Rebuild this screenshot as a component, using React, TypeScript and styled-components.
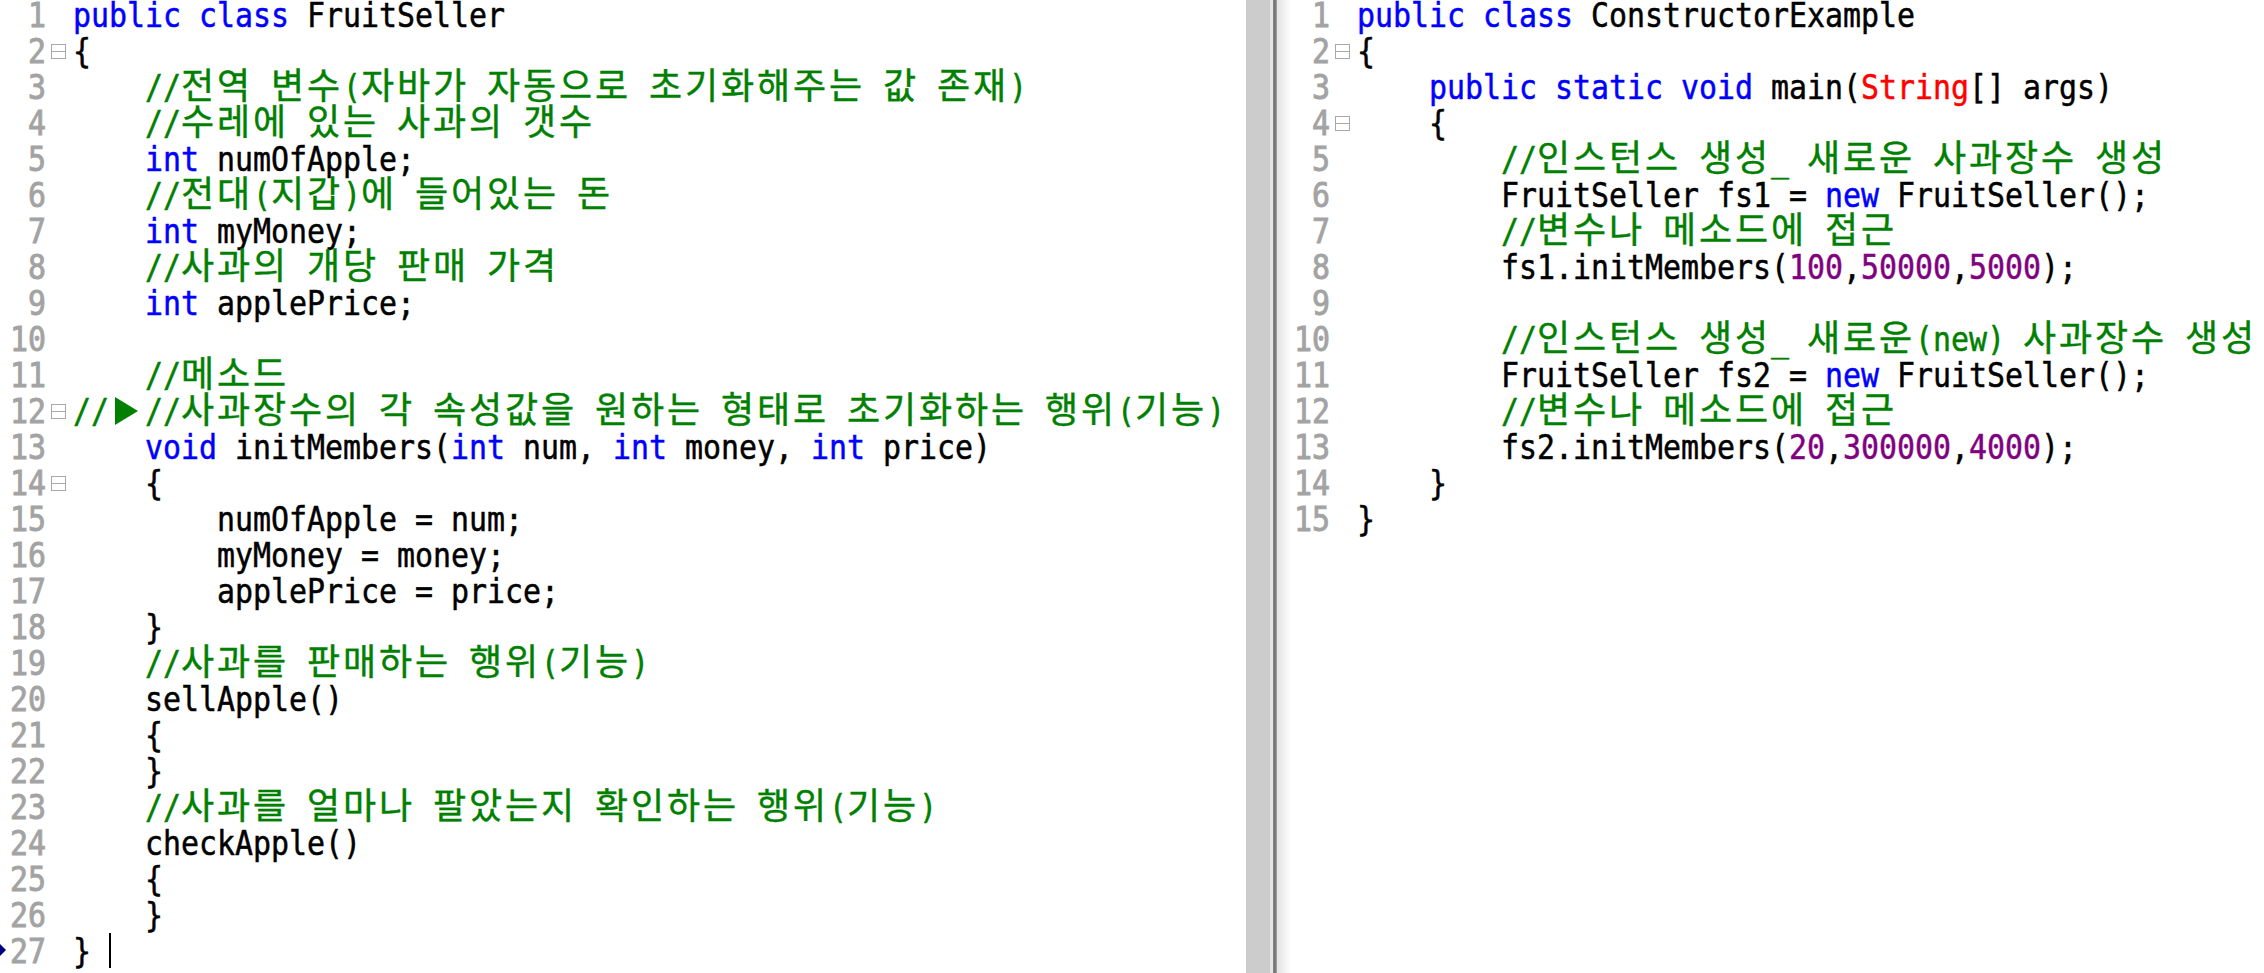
import React from "react";
import styled, { createGlobalStyle } from "styled-components";

const Global = createGlobalStyle`
  html, body { margin: 0; padding: 0; background: #fff; overflow: hidden; }
  #root { width: 2264px; height: 973px; overflow: hidden; }
`;

const CELL = 18;

const Frame = styled.div`
  display: flex;
  width: 2264px;
  height: 973px;
  overflow: hidden;
  background: #fff;
`;

const Pane = styled.div<{ $width: number }>`
  width: ${(p) => p.$width}px;
  flex: none;
  overflow: hidden;
  display: flex;
  flex-direction: column;
  margin-top: -2px;
`;

const Splitter = styled.div`
  flex: none;
  display: flex;
  width: 38px;
  height: 973px;
  position: relative;
`;

const SplitBar = styled.div`
  width: 24px;
  background: #cccccc;
`;

const SplitGap = styled.div`
  width: 3px;
  background: #e4e4e4;
`;

const SplitLine = styled.div`
  width: 4px;
  background: linear-gradient(90deg, #8a8a8a, #6e6e6e 50%, #a8a8a8);
`;

const SplitShadow = styled.div`
  position: absolute;
  left: 31px;
  top: 0;
  bottom: 0;
  width: 14px;
  background: linear-gradient(90deg, #e2e2e2, #ffffff);
`;

const Row = styled.div`
  display: flex;
  height: 36px;
  flex: none;
  position: relative;
  font-family: "DejaVu Sans Mono", monospace;
  font-size: 33px;
  line-height: 36px;
  white-space: pre;
  color: #000;
  -webkit-text-stroke: 0.5px currentColor;
`;

const LineNo = styled.div`
  width: 46px;
  flex: none;
  display: flex;
  justify-content: flex-end;
  color: #a3a3a3;
  -webkit-text-stroke: 0.9px currentColor;
`;

const FoldCell = styled.div`
  width: 27px;
  flex: none;
  padding: 10px 0 0 5px;
  box-sizing: border-box;
`;

const FoldBox = styled.div`
  width: 15px;
  height: 15px;
  box-sizing: border-box;
  border: 1px solid #a8a8a8;
  display: flex;
  align-items: center;
  &::before {
    content: "";
    display: block;
    width: 100%;
    height: 1px;
    background: #a8a8a8;
  }
`;

const Code = styled.div`
  flex: 1;
  min-width: 0;
`;

/* A run of Latin text: DejaVu Sans Mono narrowed to the 18px cell of the original editor font. */
const Latin = styled.span<{ $cols: number }>`
  display: inline-block;
  width: ${(p) => p.$cols * CELL}px;
  height: 36px;
  transform: scaleX(0.906);
  transform-origin: left center;
`;

const Kw = styled.span`
  color: #0000ff;
`;
const Str = styled.span`
  color: #ff0000;
`;
const Num = styled.span`
  color: #800080;
`;
const Cmt = styled.span`
  color: #008000;
`;
const Han = styled.span`
  font-family: "Noto Sans CJK KR", sans-serif;
  font-size: 36px;
  letter-spacing: 2.88px;
  line-height: 0;
  -webkit-text-stroke: 0.4px currentColor;
`;

const TabArrow = styled.svg`
  display: inline-block;
  width: 36px;
  height: 28px;
  vertical-align: top;
  margin-top: 3px;
`;

const Caret = styled.span`
  display: inline-block;
  width: 2px;
  height: 35px;
  background: #000;
  vertical-align: top;
  margin-top: -1px;
`;

const Marker = styled.svg`
  position: absolute;
  left: 0;
  top: 10px;
  width: 6px;
  height: 12px;
`;

const hangulSplit = /([\uac00-\ud7a3]+)/;
const L: React.FC<{ t: string }> = ({ t }) => <Latin $cols={t.length}>{t}</Latin>;

const withHan = (s: string) =>
  s.split(hangulSplit).map((part, i) => {
    if (i % 2) return <Han key={i}>{part}</Han>;
    return part ? <L key={i} t={part} /> : null;
  });

const renderCode = (s: string) => {
  if (s.trimStart().startsWith("//")) {
    return <Cmt>{withHan(s)}</Cmt>;
  }
  const parts = s.split(/(\b(?:public|class|static|void|int|new|String)\b|\b\d+\b)/);
  return parts.map((p, i) => {
    if (!p) return null;
    if (p === "String") return <Str key={i}><L t={p} /></Str>;
    if (/^(public|class|static|void|int|new)$/.test(p)) return <Kw key={i}><L t={p} /></Kw>;
    if (/^\d+$/.test(p)) return <Num key={i}><L t={p} /></Num>;
    return <L key={i} t={p} />;
  });
};

type LineDef = string | { special: "tab12" } | { special: "caret" };

const leftLines: LineDef[] = [
  "public class FruitSeller",
  "{",
  "    //전역 변수(자바가 자동으로 초기화해주는 값 존재)",
  "    //수레에 있는 사과의 갯수",
  "    int numOfApple;",
  "    //전대(지갑)에 들어있는 돈",
  "    int myMoney;",
  "    //사과의 개당 판매 가격",
  "    int applePrice;",
  "",
  "    //메소드",
  { special: "tab12" },
  "    void initMembers(int num, int money, int price)",
  "    {",
  "        numOfApple = num;",
  "        myMoney = money;",
  "        applePrice = price;",
  "    }",
  "    //사과를 판매하는 행위(기능)",
  "    sellApple()",
  "    {",
  "    }",
  "    //사과를 얼마나 팔았는지 확인하는 행위(기능)",
  "    checkApple()",
  "    {",
  "    }",
  { special: "caret" },
];

const rightLines: LineDef[] = [
  "public class ConstructorExample",
  "{",
  "    public static void main(String[] args)",
  "    {",
  "        //인스턴스 생성_ 새로운 사과장수 생성",
  "        FruitSeller fs1 = new FruitSeller();",
  "        //변수나 메소드에 접근",
  "        fs1.initMembers(100,50000,5000);",
  "",
  "        //인스턴스 생성_ 새로운(new) 사과장수 생성",
  "        FruitSeller fs2 = new FruitSeller();",
  "        //변수나 메소드에 접근",
  "        fs2.initMembers(20,300000,4000);",
  "    }",
  "}",
];

const renderLine = (l: LineDef) => {
  if (typeof l === "string") return renderCode(l);
  if (l.special === "tab12") {
    return (
      <Cmt>
        <L t="//" />
        <TabArrow viewBox="0 0 36 28">
          <polygon points="6,0 29,14 6,28" fill="#008000" stroke="none" />
        </TabArrow>
        {withHan("//사과장수의 각 속성값을 원하는 형태로 초기화하는 행위(기능)")}
      </Cmt>
    );
  }
  return (
    <>
      <L t="} " />
      <Caret />
    </>
  );
};

const Editor: React.FC<{ lines: LineDef[]; folds: number[]; width: number; marker?: number }> = ({
  lines,
  folds,
  width,
  marker,
}) => (
  <Pane $width={width}>
    {lines.map((l, i) => (
      <Row key={i}>
        {marker === i + 1 && (
          <Marker viewBox="0 0 6 12">
            <polygon points="0,0 6,6 0,12" fill="#000080" />
          </Marker>
        )}
        <LineNo>
          <L t={String(i + 1)} />
        </LineNo>
        <FoldCell>{folds.includes(i + 1) && <FoldBox />}</FoldCell>
        <Code>{renderLine(l)}</Code>
      </Row>
    ))}
  </Pane>
);

export default function App() {
  return (
    <Frame>
      <Global />
      <Editor lines={leftLines} folds={[2, 12, 14]} width={1246} marker={27} />
      <Splitter>
        <SplitBar />
        <SplitGap />
        <SplitLine />
        <SplitShadow />
      </Splitter>
      <Editor lines={rightLines} folds={[2, 4]} width={980} />
    </Frame>
  );
}
